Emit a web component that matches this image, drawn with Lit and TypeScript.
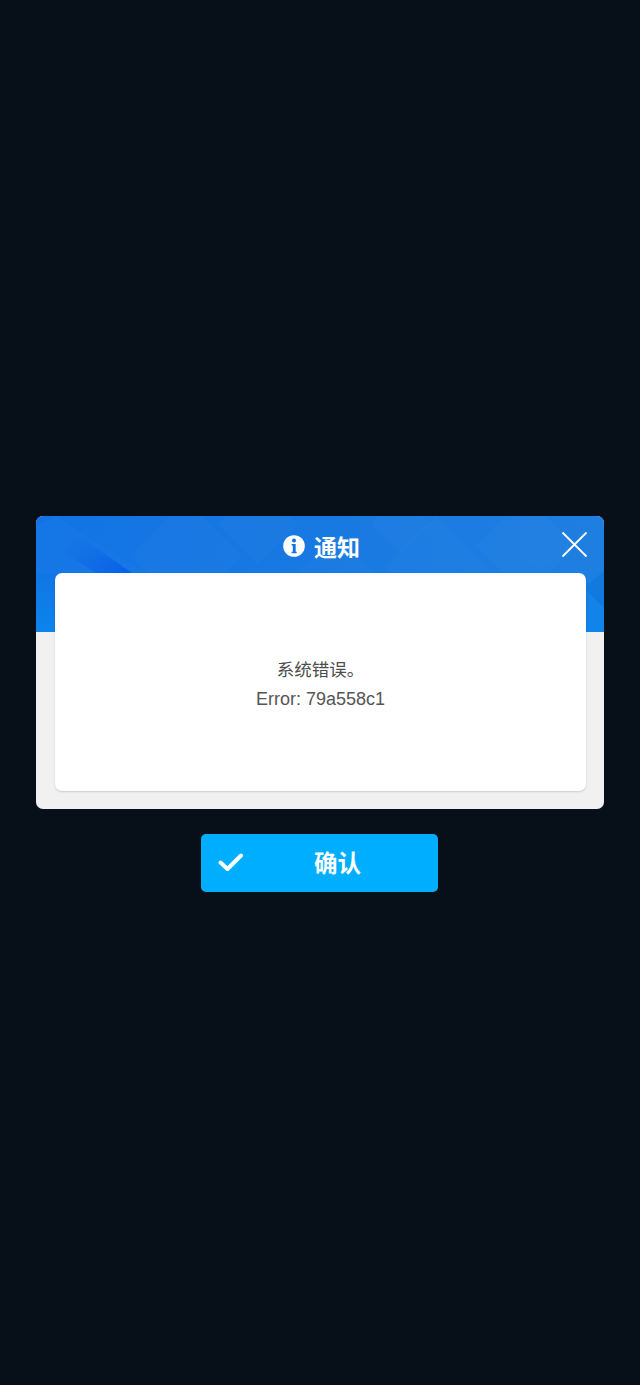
import { LitElement, html, css, svg } from "lit";
import { customElement } from "lit/decorators.js";

const diamonds = [
  [150, 40, 56, 0.02], [222, 8, 40, 0.018], [365, 8, 30, 0.02], [400, 50, 50, 0.015], [490, 30, 50, 0.015], [300, 90, 70, 0.015], [120, 100, 50, 0.012],
];

@customElement("app-root")
export class AppRoot extends LitElement {
  static styles = css`
    :host {
      display: flex;
      flex-direction: column;
      align-items: center;
      box-sizing: border-box;
      width: 640px;
      height: 1385px;
      padding-top: 516px;
      background: #070f19;
      font-family: "Liberation Sans", "Noto Sans CJK SC", sans-serif;
    }
    .modal {
      position: relative;
      box-sizing: border-box;
      width: 568px;
      height: 293px;
      background: #f1f1f1;
      border-radius: 7px;
      overflow: hidden;
    }
    .band {
      position: absolute;
      inset: 0 0 auto 0;
      width: 100%;
      height: 116px;
      display: block;
    }
    .content {
      position: relative;
      display: flex;
      flex-direction: column;
      height: 100%;
      box-sizing: border-box;
      padding: 0 18px 18px 19px;
    }
    .head {
      height: 57px;
      flex: none;
      display: flex;
      align-items: center;
      justify-content: center;
      gap: 9px;
      padding-left: 2px;
      padding-top: 2px;
      box-sizing: border-box;
      color: #fff;
      font-size: 23px;
      font-weight: 700;
      font-family: "Noto Sans CJK SC", sans-serif;
      line-height: 30px;
    }
    .close {
      position: absolute;
      top: 15px;
      right: 16px;
      width: 27px;
      height: 27px;
    }
    .card {
      flex: 1;
      display: flex;
      flex-direction: column;
      align-items: center;
      justify-content: center;
      padding-top: 4px;
      background: #fff;
      border-radius: 7px;
      box-shadow: 0 1px 2px rgba(0, 0, 0, 0.16);
      color: #4c4c4c;
      font-size: 17px;
      line-height: 29px;
      font-family: "Noto Sans CJK SC", sans-serif;
      font-weight: 400;
    }
    .card .zh { margin-bottom: 2px; font-size: 17.5px; }
    .card .en {
      font-family: "Liberation Sans", "Noto Sans CJK SC", sans-serif;
      font-size: 18px;
      color: #555;
    }
    .btn {
      margin-top: 25px;
      margin-right: 1px;
      width: 237px;
      height: 58px;
      box-sizing: border-box;
      border-radius: 5px;
      background: #00aeff;
      display: flex;
      align-items: center;
      padding: 0 0 0 16px;
      color: #fff;
    }
    .btn svg { width: 27px; height: 22px; flex: none; margin-top: -2px; }
    .btn span {
      margin-left: 70px;
      margin-top: -3px;
      font-size: 23.5px;
      font-weight: 700;
      line-height: 30px;
      font-family: "Noto Sans CJK SC", sans-serif;
    }
  `;

  render() {
    return html`
      <div class="modal">
        <svg class="band" viewBox="0 0 568 116" preserveAspectRatio="none">
          <defs>
            <linearGradient id="bg" x1="0" y1="0" x2="1" y2="0">
              <stop offset="0" stop-color="#1273e4" />
              <stop offset="1" stop-color="#1f7fe0" />
            </linearGradient>
            <linearGradient id="bot" x1="0" y1="0" x2="0" y2="1">
              <stop offset="0.4" stop-color="#0a84ee" stop-opacity="0" />
              <stop offset="1" stop-color="#0c86ee" stop-opacity="0.9" />
            </linearGradient>
            <linearGradient id="dark" x1="0" y1="0" x2="1" y2="1">
              <stop offset="0" stop-color="#1273e4" stop-opacity="0" />
              <stop offset="1" stop-color="#0659e8" />
            </linearGradient>
          </defs>
          <rect width="568" height="116" fill="url(#bg)" />
          <polygon points="20,0 110,57 0,57 0,10" fill="#1b7ae6" opacity="0.45" />
          <polygon points="40,18 96,57 60,57 30,38" fill="url(#dark)" />
          ${diamonds.map(
            ([x, y, r, o]) =>
              svg`<polygon points="${x},${y - r} ${x + r},${y} ${x},${y + r} ${x - r},${y}" fill="#ffffff" opacity="${o}" />`
          )}
          <rect width="568" height="116" fill="url(#bot)" />
          <polygon points="568,55 548,72 568,92" fill="#0a6fd8" opacity="0.4" />
        </svg>
        <div class="content">
          <div class="head">
            <svg width="22" height="22" viewBox="0 0 22 22">
              <circle cx="11" cy="11" r="10.8" fill="#fff" />
              <circle cx="11" cy="5.6" r="2" fill="#1273e4" />
              <path d="M8.6 8.9h4.1v7.9h1v1.5H8.6v-1.5h1.2v-6.4H8.6z" fill="#1273e4" />
            </svg>
            <span>通知</span>
          </div>
          <svg class="close" viewBox="0 0 27 27">
            <path d="M1.5 1.5L25.5 25.5M25.5 1.5L1.5 25.5" stroke="#fff" stroke-width="1.8" fill="none" />
          </svg>
          <div class="card">
            <div class="zh">系统错误。</div>
            <div class="en">Error: 79a558c1</div>
          </div>
        </div>
      </div>
      <div class="btn">
        <svg viewBox="0 0 26 22">
          <path d="M3 11.5L10 18L23.5 4.5" stroke="#fff" stroke-width="4" fill="none" stroke-linecap="round" stroke-linejoin="round" />
        </svg>
        <span>确认</span>
      </div>
    `;
  }
}
